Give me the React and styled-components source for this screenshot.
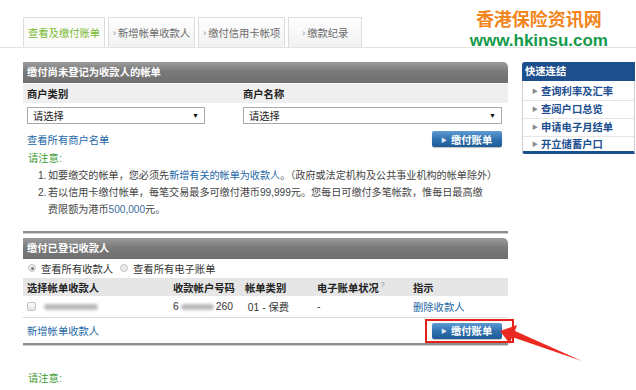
import React from "react";
import styled, { createGlobalStyle } from "styled-components";

const Global = createGlobalStyle`
  html, body { margin: 0; padding: 0; background: #fff; }
  body {
    font-family: "Liberation Sans", "Noto Sans CJK SC", sans-serif;
    font-size: 10.3px;
    color: #333;
    width: 636px;
    height: 390px;
    overflow: hidden;
  }
  * { box-sizing: border-box; }
`;

const Page = styled.div`
  width: 636px;
  height: 390px;
  overflow: hidden;
`;

const TopBar = styled.div`
  display: flex;
  height: 48px;
  border-bottom: 1px solid #e3e3e3;
  padding-left: 23px;
`;

const Tabs = styled.div`
  display: flex;
  gap: 3px;
  align-self: flex-end;
`;

const Tab = styled.div`
  height: 30px;
  min-width: 74px;
  padding: 0 4px;
  display: flex;
  align-items: center;
  justify-content: center;
  border: 1px solid #dcdcdc;
  border-bottom: none;
  background: ${(p) => (p.$active ? "#fbfbfb" : "linear-gradient(#ffffff, #f1f1f1)")};
  color: ${(p) => (p.$active ? "#79b92e" : "#6a6a6a")};
  white-space: nowrap;
`;

const Chev = styled.span`
  font-size: 9px;
  color: #888;
  margin-right: 2px;
`;

const Logo = styled.div`
  margin-left: auto;
  margin-right: 28px;
  margin-top: 8px;
  display: flex;
  flex-direction: column;
  align-items: center;
`;

const LogoCn = styled.div`
  font-family: "Noto Sans CJK SC", sans-serif;
  font-weight: 700;
  font-size: 18px;
  line-height: 20px;
  height: 20px;
  color: #f2851c;
`;

const LogoEn = styled.div`
  font-family: "Liberation Sans", sans-serif;
  font-weight: 700;
  font-size: 17px;
  line-height: 16px;
  color: #139a4b;
  margin-top: 5px;
`;

const Body = styled.div`
  display: flex;
  gap: 14px;
  padding: 14px 0 0 23px;
`;

const Main = styled.div`
  width: 485px;
  flex: none;
`;

const Side = styled.div`
  width: 113px;
  flex: none;
`;

const SectionHead = styled.div`
  height: 21px;
  line-height: 21px;
  padding-left: 4px;
  color: #fff;
  font-weight: 700;
  background: linear-gradient(#9b9b9b, #7a7a7a 45%, #6f6f6f);
  border-top-right-radius: 5px;
  margin-top: ${(p) => p.$gap || 0}px;
`;

const FieldGrid = styled.div`
  display: grid;
  grid-template-columns: 216px 1fr;
  align-items: center;
  padding-left: 4px;
`;

const LabelRow = styled(FieldGrid)`
  margin-top: 1px;
  height: 19px;
  background: #efefef;
  font-weight: 700;
  color: #222;
`;

const SelectRow = styled(FieldGrid)`
  margin-top: 4px;
`;

const Select = styled.div`
  width: ${(p) => p.$w}px;
  height: 17px;
  border: 1px solid #a9a9a9;
  background: #fff;
  display: flex;
  align-items: center;
  justify-content: space-between;
  padding: 0 5px 0 5px;
  color: #222;
`;

const Caret = styled.span`
  font-size: 7px;
  color: #111;
`;

const ActionRow = styled.div`
  display: flex;
  align-items: center;
  justify-content: space-between;
  padding: 0 6px 0 4px;
  height: ${(p) => p.$h}px;
  margin-top: ${(p) => p.$mt || 0}px;
`;

const Link = styled.span`
  color: #2467a6;
`;

const BtnWrap = styled.div`
  position: relative;
`;

const Button = styled.div`
  width: 70px;
  height: 16px;
  border-radius: 2px;
  background: linear-gradient(#5f9bd2, #2d6eae 55%, #1d5a96);
  color: #fff;
  font-weight: 700;
  display: flex;
  align-items: center;
  gap: 4px;
  padding-left: 9px;
  box-shadow: 0 1px 1px rgba(0, 0, 0, 0.25);
`;

const BtnArrow = styled.span`
  font-size: 6px;
  color: #dce8f4;
`;

const Highlight = styled.div`
  position: absolute;
  left: -7px;
  top: -4px;
  width: 89px;
  height: 24px;
  border: 2px solid #e3221b;
  pointer-events: none;
`;

const Pointer = styled.svg`
  position: absolute;
  left: 66px;
  top: 0;
  overflow: visible;
`;

const NoteTitle = styled.div`
  color: #3e9b36;
  line-height: 14px;
  padding-left: 5px;
  margin-top: ${(p) => p.$mt}px;
`;

const NoteList = styled.div`
  margin-top: 1px;
  padding-left: 15px;
  color: #444;
  font-size: 10.1px;
`;

const NoteItem = styled.div`
  display: grid;
  grid-template-columns: 10px auto;
  line-height: 17px;
  white-space: nowrap;
`;

const Blue = styled.span`
  color: ${(p) => p.$c || "#2467a6"};
`;

const Divider = styled.div`
  height: 3px;
  margin-top: ${(p) => p.$mt}px;
  border-top: 2px solid #8d8d8d;
  background: #cfcfcf;
`;

const RadioRow = styled.div`
  height: 18px;
  display: flex;
  align-items: center;
  padding-left: 5px;
  gap: 7px;
  color: #333;
`;

const RadioItem = styled.label`
  display: flex;
  align-items: center;
  gap: 5px;
`;

const Radio = styled.span`
  width: 8px;
  height: 8px;
  border-radius: 50%;
  border: 1px solid #c4c4c4;
  background: #ececec;
  display: flex;
  align-items: center;
  justify-content: center;
  &::after {
    content: "";
    width: 3px;
    height: 3px;
    border-radius: 50%;
    background: ${(p) => (p.$on ? "#777" : "transparent")};
  }
`;

const TableGrid = styled.div`
  display: grid;
  grid-template-columns: 146px 72px 72px 96px 1fr;
  align-items: center;
  padding-left: 4px;
`;

const THead = styled(TableGrid)`
  margin-top: 1px;
  height: 18px;
  background: #e6e6e6;
  font-weight: 700;
  color: #222;
`;

const TRow = styled(TableGrid)`
  height: 22px;
  border-bottom: 1px solid #d9d9d9;
  color: #333;
`;

const Help = styled.sup`
  font-size: 7px;
  color: #6f8fb0;
  font-weight: 400;
  margin-left: 2px;
`;

const NameCell = styled.div`
  display: flex;
  align-items: center;
  gap: 8px;
`;

const Check = styled.span`
  width: 9px;
  height: 9px;
  border: 1px solid #c2c2c2;
  border-radius: 2px;
  background: linear-gradient(#fafafa, #e4e4e4);
`;

const Blur = styled.span`
  display: inline-block;
  width: ${(p) => p.$w}px;
  height: 6px;
  background: #b9b9b9;
  border-radius: 3px;
  filter: blur(1.6px);
  vertical-align: middle;
  margin: 0 ${(p) => p.$m || 0}px;
`;

const SideHead = styled.div`
  height: 19px;
  line-height: 19px;
  padding-left: 3px;
  background: #1e4f8d;
  color: #fff;
  font-weight: 700;
  border-top-left-radius: 3px;
`;

const SideList = styled.div`
  border-left: 1px solid #cfcfcf;
  border-right: 1px solid #cfcfcf;
  padding-top: 2px;
  border-bottom: 3px solid #1e4f8d;
  border-bottom-left-radius: 3px;
`;

const SideItem = styled.div`
  height: 18px;
  line-height: 17px;
  padding-left: 9px;
  display: flex;
  align-items: center;
  gap: 3px;
  color: #1d4e8f;
  font-weight: 700;
  border-bottom: 1px solid #e6e6e6;
  &:last-child {
    height: 14px;
    border-bottom: none;
  }
`;

const SideBullet = styled.span`
  font-size: 6px;
  color: #8a8a8a;
  font-weight: 400;
`;

const quick = ["查询利率及汇率", "查阅户口总览", "申请电子月结单", "开立储蓄户口"];

export default function App() {
  return (
    <Page>
      <Global />
      <TopBar>
        <Tabs>
          <Tab $active>查看及缴付账单</Tab>
          <Tab><Chev>›</Chev>新增帐单收款人</Tab>
          <Tab><Chev>›</Chev>缴付信用卡帐项</Tab>
          <Tab><Chev>›</Chev>缴款纪录</Tab>
        </Tabs>
        <Logo>
          <LogoCn>香港保险资讯网</LogoCn>
          <LogoEn>www.hkinsu.com</LogoEn>
        </Logo>
      </TopBar>

      <Body>
        <Main>
          <SectionHead>缴付尚未登记为收款人的帐单</SectionHead>
          <LabelRow>
            <span>商户类别</span>
            <span>商户名称</span>
          </LabelRow>
          <SelectRow>
            <Select $w={178}><span>请选择</span><Caret>▼</Caret></Select>
            <Select $w={259}><span>请选择</span><Caret>▼</Caret></Select>
          </SelectRow>
          <ActionRow $h={16} $mt={7}>
            <Link>查看所有商户名单</Link>
            <Button><BtnArrow>▶</BtnArrow>缴付账单</Button>
          </ActionRow>

          <NoteTitle $mt={5}>请注意:</NoteTitle>
          <NoteList>
            <NoteItem>
              <span>1.</span>
              <span>
                如要缴交的帐单，您必须先<Blue>新增有关的帐单为收款人</Blue>。（政府或法定机构及公共事业机构的帐单除外）
              </span>
            </NoteItem>
            <NoteItem>
              <span>2.</span>
              <span>
                若以信用卡缴付帐单，每笔交易最多可缴付港币99,999元。您每日可缴付多笔帐款，惟每日最高缴
                <br />
                费限额为港币<Blue $c="#3d6c9c">500,000</Blue>元。
              </span>
            </NoteItem>
          </NoteList>
          <Divider $mt={13} />

          <SectionHead $gap={4}>缴付已登记收款人</SectionHead>
          <RadioRow>
            <RadioItem><Radio $on />查看所有收款人</RadioItem>
            <RadioItem><Radio />查看所有电子账单</RadioItem>
          </RadioRow>
          <THead>
            <span>选择帐单收款人</span>
            <span>收款帐户号码</span>
            <span>帐单类别</span>
            <span>电子账单状况<Help>?</Help></span>
            <span>指示</span>
          </THead>
          <TRow>
            <NameCell><Check /><Blur $w={54} /></NameCell>
            <span>6<Blur $w={33} $m={2} />260</span>
            <span>&nbsp;01 - 保费</span>
            <span>-</span>
            <Link>删除收款人</Link>
          </TRow>
          <ActionRow $h={25}>
            <Link>新增帐单收款人</Link>
            <BtnWrap>
              <Button><BtnArrow>▶</BtnArrow>缴付账单</Button>
              <Highlight />
              <Pointer width="90" height="42" viewBox="0 0 90 42">
                <polygon
                  points="2,8 19,2 17,8 84,38 14,14 12,21"
                  fill="#ea2a20"
                />
              </Pointer>
            </BtnWrap>
          </ActionRow>
          <Divider $mt={0} />
          <NoteTitle $mt={26}>请注意:</NoteTitle>
        </Main>

        <Side>
          <SideHead>快速连结</SideHead>
          <SideList>
            {quick.map((q) => (
              <SideItem key={q}>
                <SideBullet>▶</SideBullet>
                {q}
              </SideItem>
            ))}
          </SideList>
        </Side>
      </Body>
    </Page>
  );
}
